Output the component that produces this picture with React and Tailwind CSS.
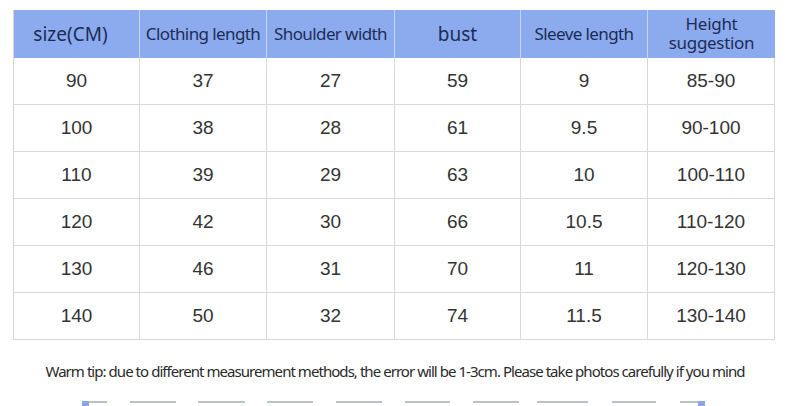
import React from 'react'

const headers = [
  { label: 'size(CM)', cls: 'text-[19px] pr-3' },
  { label: 'Clothing length', cls: 'text-[17px] tracking-[-0.6px]' },
  { label: 'Shoulder width', cls: 'text-[17px] tracking-[-0.6px]' },
  { label: 'bust', cls: 'text-[19px]' },
  { label: 'Sleeve length', cls: 'text-[17px] tracking-[-0.6px]' },
  { label: 'Height suggestion', cls: 'text-[17px] leading-[19px] tracking-[-0.3px] px-6 pb-[3px]' },
]

const rows = [
  ['90', '37', '27', '59', '9', '85-90'],
  ['100', '38', '28', '61', '9.5', '90-100'],
  ['110', '39', '29', '63', '10', '100-110'],
  ['120', '42', '30', '66', '10.5', '110-120'],
  ['130', '46', '31', '70', '11', '120-130'],
  ['140', '50', '32', '74', '11.5', '130-140'],
]

const segments = [
  [82, 25, true],
  [130, 46],
  [198, 47],
  [267, 46],
  [336, 46],
  [405, 45],
  [473, 46],
  [537, 51],
  [612, 44],
  [680, 25, 'end'],
]

export default function App() {
  return (
    <div className="w-[790px] h-[406px] bg-white relative overflow-hidden">
      <div className="pt-[10px] pl-[13px]">
        <div className="grid grid-cols-[126px_127px_128px_126px_127px_127px] w-[761px] border-l border-[#d6d6d6]">
          {headers.map((h, i) => (
            <div
              key={i}
              className={`h-[48px] bg-[#8cabee] flex items-center justify-center text-center text-[#1d2b57] ${i < 5 ? 'border-r border-[#c9d6f5]' : ''} ${h.cls}`}
              style={{ fontFamily: '"Noto Sans", "Open Sans", sans-serif' }}
            >
              {h.label}
            </div>
          ))}
          {rows.map((r, ri) =>
            r.map((c, ci) => (
              <div
                key={ri + '-' + ci}
                className="h-[47px] flex items-center justify-center border-r border-b border-[#d9d9d9] text-[19px] text-[#333333]"
                style={{ fontFamily: '"Liberation Sans", Arial, sans-serif' }}
              >
                {c}
              </div>
            ))
          )}
        </div>
      </div>
      <p
        className="mt-[20px] text-center text-[15px] tracking-[-0.95px] text-[#2a2a2a]"
        style={{ fontFamily: '"Noto Sans", "Open Sans", sans-serif' }}
      >
        Warm tip: due to different measurement methods, the error will be 1-3cm. Please take photos carefully if you mind
      </p>
      {segments.map(([x, w, blue], i) => (
        <div key={i} className="absolute top-[401px] h-[2px] bg-[#b9c2c9]" style={{ left: x, width: w }}>
          {blue === true && <div className="absolute left-0 top-0 w-[7px] h-[5px] bg-[#8ea6e6]" />}
          {blue === 'end' && <div className="absolute right-0 top-0 w-[7px] h-[5px] bg-[#8ea6e6]" />}
        </div>
      ))}
    </div>
  )
}
